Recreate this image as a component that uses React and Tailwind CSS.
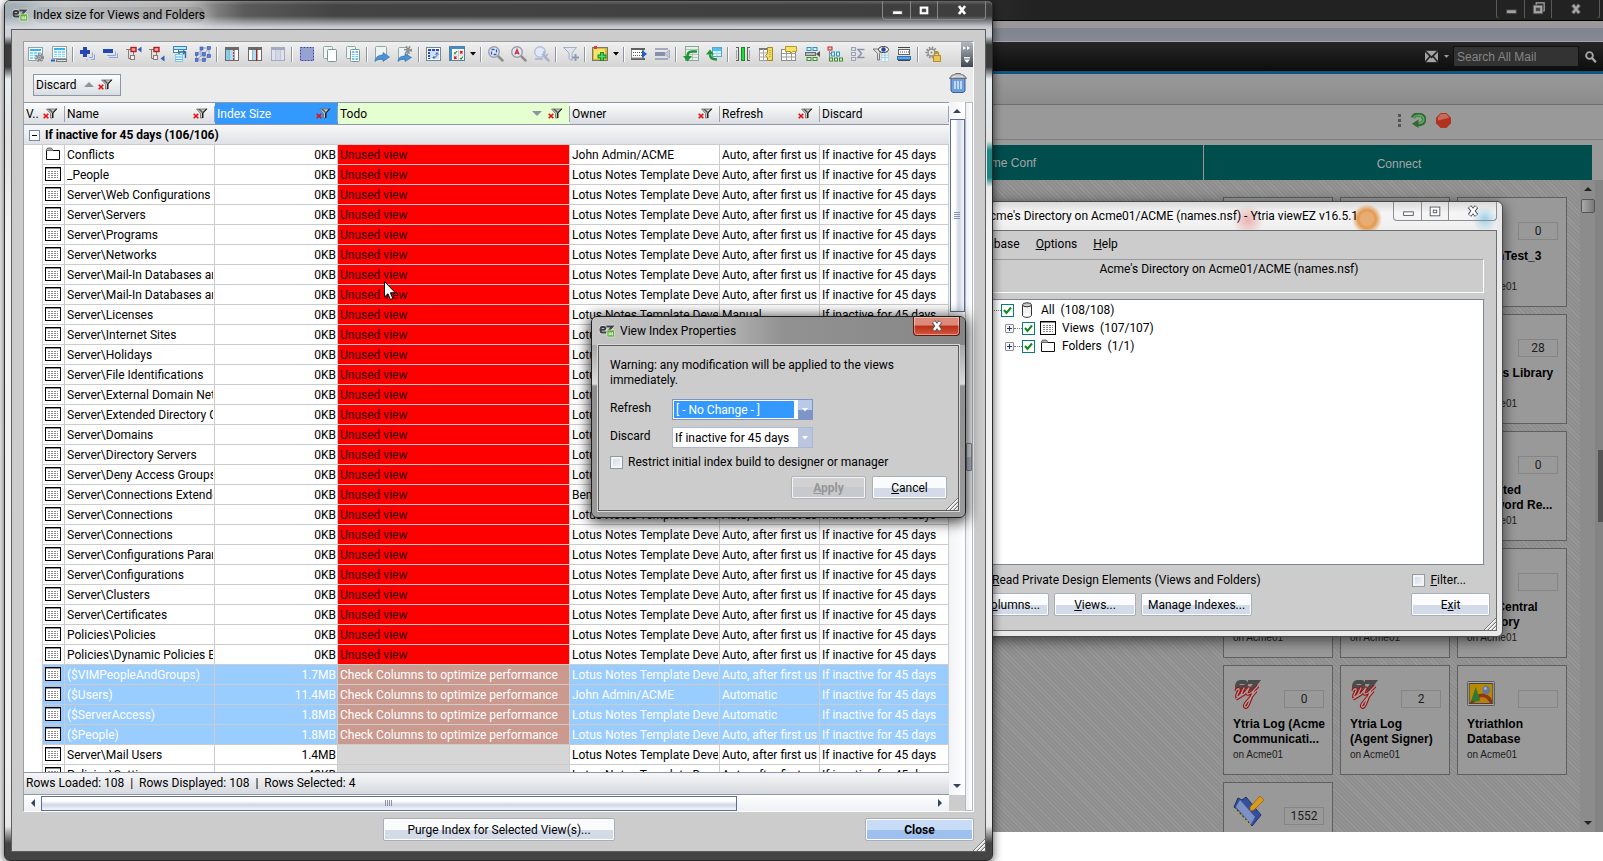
import React, { useState } from "react";
import clsx from "clsx";

const LOTUS = "Lotus Notes Template Deve";
const AUTO_FIRST = "Auto, after first us";
const INACTIVE = "If inactive for 45 days";

const unusedViews = [
  { name: "Conflicts", folder: true, owner: "John Admin/ACME" },
  { name: "_People" },
  { name: "Server\\Web Configurations" },
  { name: "Server\\Servers" },
  { name: "Server\\Programs" },
  { name: "Server\\Networks" },
  { name: "Server\\Mail-In Databases ar" },
  { name: "Server\\Mail-In Databases ar" },
  { name: "Server\\Licenses", refresh: "Manual" },
  { name: "Server\\Internet Sites" },
  { name: "Server\\Holidays" },
  { name: "Server\\File Identifications" },
  { name: "Server\\External Domain Net" },
  { name: "Server\\Extended Directory C" },
  { name: "Server\\Domains" },
  { name: "Server\\Directory Servers" },
  { name: "Server\\Deny Access Groups" },
  { name: "Server\\Connections Extende", owner: "Benjamin Admin/ACME" },
  { name: "Server\\Connections" },
  { name: "Server\\Connections" },
  { name: "Server\\Configurations Parar" },
  { name: "Server\\Configurations" },
  { name: "Server\\Clusters" },
  { name: "Server\\Certificates" },
  { name: "Policies\\Policies" },
  { name: "Policies\\Dynamic Policies B" },
].map((row) => ({ ...row, size: "0KB", todo: "Unused view" }));

const CHECK = "Check Columns to optimize performance";

const rows = [
  ...unusedViews,
  { name: "($VIMPeopleAndGroups)", size: "1.7MB", todo: CHECK, selected: true },
  {
    name: "($Users)",
    size: "11.4MB",
    todo: CHECK,
    selected: true,
    owner: "John Admin/ACME",
    refresh: "Automatic",
  },
  {
    name: "($ServerAccess)",
    size: "1.8MB",
    todo: CHECK,
    selected: true,
    refresh: "Automatic",
  },
  { name: "($People)", size: "1.8MB", todo: CHECK, selected: true },
  { name: "Server\\Mail Users", size: "1.4MB" },
  { name: "Policies\\Settings", size: "43KB" },
];

const cards = [
  { title: "Agent Log", count: "4", icon: "ez" },
  { title: "Acme Mail", count: "12", icon: "ez" },
  { title: "ActionTest_3", count: "0" },
  { title: "Domino Log", count: "1", icon: "ez" },
  { title: "Catalog", count: "7", icon: "ez" },
  { title: "Acme's Library", count: "28" },
  { title: "Monitoring", count: "3", icon: "ez" },
  { title: "Statistics", count: "9", icon: "ez" },
  { title: "Activated\nPassword Re...", count: "0" },
  { title: "Reports", count: "", icon: "ez" },
  { title: "Requests", count: "", icon: "ez" },
  { title: "Data Central\nDirectory", count: "" },
  { title: "Ytria Log (Acme\nCommunicati...", count: "0", icon: "ez" },
  { title: "Ytria Log\n(Agent Signer)", count: "2", icon: "ez" },
  { title: "Ytriathlon\nDatabase", count: "", icon: "picture" },
  { title: "Journal", count: "1552", icon: "book" },
];

/* ---------- icons ---------- */

const Svg = ({ size = 16, children, className, ...rest }) => (
  <svg
    width={size}
    height={size}
    viewBox="0 0 16 16"
    fill="none"
    aria-hidden="true"
    className={clsx("block shrink-0", className)}
    {...rest}
  >
    {children}
  </svg>
);

const Sheet = ({ x = 0, y = 1, w = 14, h = 13 }) => (
  <g>
    <rect x={x + 0.5} y={y + 0.5} width={w} height={h} fill="#fff" stroke="#8aa5a8" />
    <rect x={x + 2} y={y + 2} width={w - 3} height="2" fill="#35b4e8" />
    <rect x={x + 2} y={y + 5} width={w - 3} height={h - 6} fill="#8fd8f5" />
    <path
      d={`M${x + 2} ${y + 7.5}h${w - 3}M${x + 2} ${y + 9.5}h${w - 3}M${x + 5.5} ${y + 5}v${h - 6}M${x + 9.5} ${y + 5}v${h - 6}`}
      stroke="#fff"
      strokeOpacity=".7"
    />
  </g>
);

const Columns = ({ a, b, c, bar, dashed, frame = "#6a6a6a", side = "#d9d6d2" }) => (
  <g>
    <rect x="1.500" y="1.500" width="13" height="13" fill={side} stroke={frame} />
    <rect x="2" y="4" width="3" height="10" fill={a} />
    <rect x="6" y="4" width="4" height="10" fill={b} />
    <rect x="11" y="4" width="3" height="10" fill={c} />
    <path d="M5.500 4v10M10.500 4v10" stroke={frame} strokeOpacity=".4" />
    <path d="M1 2.500h14" stroke={frame} strokeWidth="3" />
    {bar && <path d="M9.500 3v12" stroke={bar} strokeDasharray={dashed ? "2 1" : undefined} />}
  </g>
);

const Cog = ({ x = 10, y = 10, r = 3, color = "#8a8a8a" }) => (
  <g>
    <circle cx={x} cy={y} r={r + 1} stroke={color} strokeWidth="2" strokeDasharray="1.5 1.4" />
    <circle cx={x} cy={y} r={r - 0.5} fill="#e6e6e6" stroke={color} strokeWidth="1.3" />
    <circle cx={x} cy={y} r="1" fill={color} />
  </g>
);

const Magnifier = ({ ring = "#9a9fa8", handle = "#8f8f8f", children }) => (
  <g>
    <path d="M10.500 10.500L14.500 14.500" stroke={handle} strokeWidth="2.500" strokeLinecap="round" />
    <circle cx="6" cy="6" r="5.300" fill="#dfe9fb" stroke={ring} strokeWidth="1.400" />
    {children}
  </g>
);

const toolIcons = {
  gridSettings: (
    <>
      <Sheet />
      <Cog x={11.5} y={11.5} r={2.5} />
    </>
  ),
  gridBar: (
    <>
      <Sheet x={1} y={0} w={14} h={12} />
      <path d="M0 14.500h4" stroke="#2a5fc0" strokeWidth="2" />
      <path d="M5 14.500h11" stroke="#7b7b7b" strokeWidth="3" />
      <path d="M6 14.500h9" stroke="#ddd" />
    </>
  ),
  expand: (
    <>
      <path d="M9 11.500h3.500v-5M11 13.500h3.500v-5M7 13v1.500" stroke="#8fa6dc" />
      <path d="M5 1v10M0 6h10" stroke="#2446b0" strokeWidth="4" />
    </>
  ),
  collapse: (
    <>
      <path d="M4 9.500h8.500v-4M6 11.500h8.500v-4" stroke="#8fa6dc" />
      <path d="M0 5h10" stroke="#2446b0" strokeWidth="4" />
    </>
  ),
  treeUp: (
    <>
      <path d="M0 3.500h5M2.500 3.500v9h2M9 8v0M7.500 6v3" stroke="#8a7a74" />
      <rect x="5" y="1.500" width="5" height="4" fill="#f4a3a3" stroke="#b51c1c" strokeWidth="1.400" />
      <rect x="4.500" y="9.500" width="4" height="4" fill="#eee" stroke="#8a7a74" />
      <path d="M15.500 .5v6l-4-3z" fill="#2f5fc0" />
    </>
  ),
  treeDown: (
    <>
      <path d="M0 3.500h5M2.500 3.500v9h2M7.500 6v3" stroke="#8a7a74" />
      <rect x="5" y="1.500" width="5" height="4" fill="#f4a3a3" stroke="#b51c1c" strokeWidth="1.400" />
      <rect x="4.500" y="9.500" width="4" height="4" fill="#eee" stroke="#8a7a74" />
      <path d="M15.500 9.500v6l-4-3z" fill="#2f5fc0" />
    </>
  ),
  swap: (
    <>
      <rect x="1.500" y=".5" width="13" height="3" fill="#b8e6f8" stroke="#3d86ad" />
      <rect x="1.500" y="3.500" width="5" height="3" fill="#fff" stroke="#3d86ad" />
      <rect x="3.500" y="8.500" width="7" height="7" fill="#e5f6fd" stroke="#7ccbea" />
      <path d="M4 11h6M4 13.500h6" stroke="#58b4d8" />
      <path d="M7 8V6h6M13.500 12V6M11 4.500L13.500 6 11 8" stroke="#2e6fa8" strokeWidth="1.400" />
    </>
  ),
  nodes: (
    <>
      <path d="M1.500 14V8H9v6zM6 10V2h8v8z" stroke="#8fa0cc" />
      <path d="M1.500 8L6 5M9 8l5-6M1.500 14L6 10M9 14l5-4" stroke="#8fa0cc" />
      <g fill="#5d7bd0" stroke="#3556b8" strokeWidth=".6">
        <rect x="0" y="6.500" width="3" height="3" />
        <rect x="7.500" y="6.500" width="3" height="3" />
        <rect x="0" y="12.500" width="3" height="3" />
        <rect x="7.500" y="12.500" width="3" height="3" />
        <rect x="12.500" y=".5" width="3" height="3" />
        <rect x="12.500" y="8.500" width="3" height="3" />
        <rect x="5" y="1" width="3" height="3" />
      </g>
    </>
  ),
  colFreeze: <Columns a="#7fd0f5" b="#a8e0f8" c="#fff" bar="#d42a2a" dashed />,
  colUnfreeze: <Columns a="#fff" b="#a8e0f8" c="#fff" bar="#c01515" />,
  colFaded: <Columns a="#dfe2ee" b="#d2d7e8" c="#dfe2ee" frame="#a5abbf" side="#d5d9e6" />,
  selectAll: (
    <rect x="1.500" y="1.500" width="13" height="13" fill="#98a2d0" stroke="#2f49b5" strokeDasharray="2 1" />
  ),
  copy: (
    <>
      <rect x="1.500" y=".5" width="9" height="12" rx="1" fill="#eef6f3" stroke="#8fa8a2" />
      <rect x="5.500" y="3.500" width="9" height="12" rx="1" fill="#fff" stroke="#7a9592" />
    </>
  ),
  copyGrid: (
    <>
      <rect x="1.500" y=".5" width="9" height="12" rx="1" fill="#eef6f3" stroke="#8fa8a2" />
      <rect x="5.500" y="3.500" width="9" height="12" rx="1" fill="#fff" stroke="#7a9592" />
      <rect x="7" y="5" width="6" height="9" fill="#6cc8ee" />
      <path d="M7 7.500h6M7 9.500h6M7 11.500h6M10 5v9" stroke="#fff" />
    </>
  ),
  exportSheet: (
    <>
      <rect x="1.500" y=".5" width="11" height="13" rx="1" fill="#eef4f2" stroke="#8fa8a2" />
      <path d="M1 15.500c0-4 3-6.500 8-6.500V6.500l6.500 4.500L9 15.500V13c-3 0-6 .5-8 2.500z" fill="#4a93d6" stroke="#2a6ab0" strokeWidth=".6" />
    </>
  ),
  exportCog: (
    <>
      <rect x="1.500" y="1.500" width="9" height="12" rx="1" fill="#eef4f2" stroke="#8fa8a2" />
      <Cog x={11} y={4} r={2} />
      <path d="M1 15.500c0-4 3-5.500 7-5.500V7.500l6.500 4-6.500 4V13c-3 0-5 .5-7 2.500z" fill="#4a93d6" stroke="#2a6ab0" strokeWidth=".6" />
    </>
  ),
  chartGrid: (
    <>
      <rect x=".5" y="1.500" width="14" height="13" fill="#fff" stroke="#6a8a94" />
      <rect x="2" y="3" width="11" height="10" fill="#d2def2" />
      <path d="M2 4h11" stroke="#2a4fae" strokeWidth="2" strokeDasharray="3 1" />
      <path d="M3 6v7" stroke="#2a4fae" strokeWidth="2" strokeDasharray="2 1" />
      <path d="M7 11.500c4 0 4-2 4-4.500M9.500 8.500L11 6.500l1.500 2M8.500 10L7 11.500 8.500 13" stroke="#3a66c0" />
    </>
  ),
  checkGrid: (
    <>
      <rect x=".5" y=".5" width="15" height="14" fill="#fff" stroke="#5a7f98" />
      <path d="M1 2h14M2 3v11" stroke="#3a8fd0" strokeWidth="2" />
      <path d="M9.500 4v10M4 9h11" stroke="#9ab0bd" strokeWidth=".6" />
      <path d="M5 6.500l1 1 2-2.500M11 12l1 1 2-2.500" stroke="#1d8f30" strokeWidth="1.200" />
      <path d="M11 5l2.500 2.500M13.500 5L11 7.500M5 10.500l2.500 2.500M7.500 10.500L5 13" stroke="#d11" strokeWidth="1.200" />
    </>
  ),
  zoomBox: (
    <Magnifier>
      <rect x="3.500" y="3.500" width="5" height="5" stroke="#3157b8" strokeWidth="1.300" strokeDasharray="3 2" />
    </Magnifier>
  ),
  zoomText: (
    <Magnifier>
      <path d="M4 8.500l2-5 2 5M4.500 7h3" stroke="#cf3030" strokeWidth="1.300" />
    </Magnifier>
  ),
  zoomFaded: (
    <Magnifier ring="#b7bfd3" handle="#a9b2c8">
      <path d="M1 13h8M10 5v6M8 8l3 3 3-3" stroke="#a7b2cc" strokeWidth="1.500" />
    </Magnifier>
  ),
  filterFaded: (
    <>
      <path d="M.5 1.500h13L9 7v7.500l-3-2V7z" fill="#dfe3ec" stroke="#a6aec2" />
      <path d="M9 11.500h7M12.500 8v7" stroke="#8f9bbb" strokeWidth="2" />
    </>
  ),
  addNote: (
    <>
      <rect x=".5" y="1.500" width="15" height="13" fill="#d8b93a" stroke="#7a776c" />
      <rect x="2" y="3" width="11" height="10" fill="#f6e36a" />
      <path d="M10 6v9M5.500 10.500h9" stroke="#1b8f2c" strokeWidth="4" />
      <path d="M10 7v7M6.500 10.500h7" stroke="#4fe05f" strokeWidth="1.500" />
      <rect x="2" y="0" width="3" height="3" fill="#e43c3c" />
    </>
  ),
  rowRight: (
    <>
      <path d="M0 3h14M0 13h14" stroke="#5f6164" strokeWidth="2" />
      <path d="M.5 4v8h12V4" fill="#fff" stroke="#8c8c8c" />
      <path d="M2 6.500h9M2 9.500h9" stroke="#555" strokeDasharray="1 1" />
      <path d="M11 4l5 4-5 4z" fill="#1f5fc8" />
    </>
  ),
  rowLeft: (
    <>
      <path d="M1 3h13M1 13h13" stroke="#a4aabc" strokeWidth="2" />
      <rect x="1" y="6" width="10" height="4" fill="#8790ab" />
      <path d="M15.500 4v8l-5-4z" fill="#c3c9d8" stroke="#8b94ad" strokeWidth=".6" />
    </>
  ),
  importGrid: (
    <>
      <rect x="2.500" y=".5" width="13" height="14" fill="#e6f0ea" stroke="#8aa894" />
      <path d="M3 3.500h12M3 8.500h12M3 11.500h12M9.500 7v7" stroke="#b3c6ba" />
      <path d="M14 5.500H9c-3 0-4.500 1-4.500 5" stroke="#1f9434" strokeWidth="2.500" />
      <path d="M0 10h9l-4.500 5.500z" fill="#1f9434" />
    </>
  ),
  refreshGrid: (
    <>
      <rect x="6.500" y="1.500" width="9" height="9" fill="#dff3fb" stroke="#58a7c8" />
      <path d="M7 3.500h8" stroke="#4fc3ea" strokeWidth="3" />
      <path d="M7 7.500h8M11 5v5" stroke="#9fd5ea" />
      <path d="M11 13.500c-5 0-7-1.500-7-5" stroke="#1f9434" strokeWidth="2.500" />
      <path d="M0 8.500L4 3.500l4 5z" fill="#1f9434" />
    </>
  ),
  colGreen: (
    <>
      <path d="M1 1.500h3M12 1.500h3M1 14.500h3M12 14.500h3M3.500 2v12M12.500 2v12" stroke="#5c5c5c" />
      <path d="M1.500 4v9M14.500 4v9" stroke="#a9a9a9" />
      <rect x="6.500" y="1.500" width="3" height="13" fill="#22d83c" stroke="#168a29" />
    </>
  ),
  colYellow: (
    <>
      <rect x="1.500" y="2.500" width="13" height="12" fill="#fff" stroke="#9a9a9a" />
      <path d="M1 3h14" stroke="#777" strokeWidth="2" />
      <path d="M1 7h14M1 11h14M5.500 3v12" stroke="#a5a5a5" />
      <path d="M9.500 1.500h5v13h-5v-3l-2-2 2-2z" fill="#f1dc6a" stroke="#a58a17" />
      <path d="M12 4v8" stroke="#a58a17" strokeDasharray="1 1" />
    </>
  ),
  noteGrid: (
    <>
      <rect x=".5" y="3.500" width="14" height="11" fill="#fff" stroke="#8b8b8b" />
      <path d="M1 7.500h14M1 11h14M5.500 4v11M10.500 4v11" stroke="#9b9b9b" />
      <path d="M4.500.5h11v5h-4l-2 2.500V5.500h-5z" fill="#f6e36a" stroke="#b59a20" />
    </>
  ),
  flow: (
    <>
      <rect x="3" y="1.500" width="4" height="3" fill="#cdeefa" stroke="#2c93bd" />
      <rect x="9" y="1.500" width="4" height="3" fill="#cdeefa" stroke="#2c93bd" />
      <rect x="1.500" y="6.500" width="10" height="3" fill="#bbb" stroke="#6a6a6a" />
      <path d="M16 5v6l-4-3z" fill="#555" />
      <rect x="3" y="11.500" width="4" height="3" fill="#d7f2d2" stroke="#3a8a30" />
      <rect x="9" y="11.500" width="4" height="3" fill="#d7f2d2" stroke="#3a8a30" />
    </>
  ),
  hierarchy: (
    <>
      <path d="M2.500 5v8M2.500 7.500H5" stroke="#888" />
      <rect x="1" y="1" width="4" height="3" fill="#f8c5c5" stroke="#c22525" />
      <rect x="4.500" y="6" width="3" height="4" fill="#cdeefa" stroke="#2c93bd" />
      <rect x="9.500" y="6" width="3" height="4" fill="#cdeefa" stroke="#2c93bd" />
      <rect x="2.500" y="12" width="3" height="3" fill="#d7f2d2" stroke="#3a8a30" />
      <rect x="7.500" y="12" width="3" height="3" fill="#d7f2d2" stroke="#3a8a30" />
      <rect x="12.500" y="12" width="3" height="3" fill="#d7f2d2" stroke="#3a8a30" />
    </>
  ),
  sum: (
    <>
      <rect x="1.500" y="1.500" width="4" height="3" fill="#dfe3ec" stroke="#9aa3b8" />
      <rect x="1.500" y="6.500" width="4" height="3" fill="#dfe3ec" stroke="#9aa3b8" />
      <rect x="1.500" y="11.500" width="4" height="3" fill="#dfe3ec" stroke="#9aa3b8" />
      <path d="M14.500 3.500H8l3.500 4-3.500 4h6.500" stroke="#8b94ad" strokeWidth="1.500" />
    </>
  ),
  filterEye: (
    <>
      <rect x="8.500" y="6.500" width="7" height="9" fill="#e5f6fd" stroke="#c3d6df" />
      <path d="M9 9h6M9 11.500h6M12 7v8" stroke="#9fcfe2" />
      <path d="M0 3h9L6.500 7.500V14h-2V7.500z" fill="#e0e0e0" stroke="#7a7a7a" />
      <ellipse cx="10.500" cy="3.500" rx="5" ry="3" fill="#fff" stroke="#333" />
      <circle cx="10.500" cy="3.500" r="2.300" fill="#23479f" />
    </>
  ),
  rowsBlue: (
    <>
      <path d="M2 1.500h12M2 14.500h12" stroke="#444" />
      <rect x="2.500" y="3.500" width="11" height="5" fill="#fff" stroke="#666" />
      <path d="M4 6h9" stroke="#555" strokeDasharray="1 1" />
      <rect x="1.500" y="10.500" width="13" height="3" fill="#5ea6e8" stroke="#2b6fb8" />
    </>
  ),
  cogLock: (
    <>
      <Cog x={6.5} y={6.5} r={4} />
      <path d="M9.500 10V8c0-3 4-3 4 0v2" stroke="#b8902a" strokeWidth="1.500" />
      <rect x="8.500" y="9.500" width="7" height="6" fill="#ecc355" stroke="#b8902a" />
    </>
  ),
};

const toolbar = [
  "gridSettings", "gridBar", "|",
  "expand", "collapse", "treeUp", "treeDown", "swap", "nodes", "|",
  "colFreeze", "colUnfreeze", "colFaded", "|",
  "selectAll", "copy", "copyGrid", "|",
  "exportSheet", "exportCog", "|",
  "chartGrid", "checkGrid", "v", "|",
  "zoomBox", "zoomText", "zoomFaded", "|",
  "filterFaded", "|",
  "addNote", "v", "|",
  "rowRight", "rowLeft", "|",
  "importGrid", "refreshGrid", "|",
  "colGreen", "colYellow", "noteGrid", "flow", "hierarchy", "sum", "filterEye", "rowsBlue", "|",
  "cogLock",
];

const EzIcon = () => (
  <Svg>
    <path d="M7 9.500H3C1 9.500 1 4 3 4h2c2 0 1.500 2.800 0 2.800H2M8 3.500h5.500L9 9.500" stroke="#fff" strokeWidth="3.500" strokeOpacity=".5" />
    <path d="M7 9.500H3C1 9.500 1 4 3 4h2c2 0 1.500 2.800 0 2.800H2M7.500 3.500h6L8 9.500" stroke="#3c4043" strokeWidth="2" />
    <rect x="8" y="7" width="7.500" height="7" fill="#5fae33" stroke="#e8f4e0" strokeWidth=".6" />
    <path d="M10 9v3.500M11.800 9v3.500M13.500 9v3.500M10 11h3.500" stroke="#fff" strokeWidth=".7" />
  </Svg>
);

const ViewIcon = () => (
  <svg width="16" height="14" viewBox="0 0 16 14" aria-hidden="true" className="block">
    <rect x=".5" y=".5" width="15" height="13" fill="#fff" stroke="#000" />
    <path d="M1 1.500h14" stroke="#8a8a8a" />
    <path d="M3 4.500h10M3 6.500h10M3 8.500h10M3 10.500h10" stroke="#6a6a6a" strokeDasharray="2 1" strokeOpacity=".8" />
  </svg>
);

const FolderIcon = () => (
  <svg width="16" height="14" viewBox="0 0 16 14" fill="none" aria-hidden="true" className="block">
    <path d="M1.500 3.500v9h13v-9H8" fill="#fff" stroke="#111" />
    <path d="M1 3.500L2.500 1h4L8 3.500z" fill="#aaa" stroke="#555" strokeWidth=".8" />
  </svg>
);

const DbIcon = () => (
  <Svg>
    <path d="M3.500 3v10.500c2 2.500 7 2.500 9 0V3" fill="#fff" stroke="#333" />
    <path d="M4.500 6h7M4.500 8h7M4.500 10h7" stroke="#ccc" strokeDasharray="1 1" />
    <ellipse cx="8" cy="2.800" rx="4.500" ry="2" fill="#ccc" stroke="#333" />
  </Svg>
);

const FilterIcon = () => (
  <svg width="15" height="12" viewBox="0 0 15 12" fill="none" aria-hidden="true" className="block shrink-0">
    <path d="M3.500 1H14L9.500 5.500V10H7.500V5.500z" fill="#c9c9c9" stroke="#6a6a6a" strokeWidth=".8" />
    <path d="M14.500 .8L10.500 5v5H9V5l4-4.200z" fill="#222" />
    <path d="M5 1l4 4 1-1-3-3z" fill="#555" />
    <path d="M.7 5.700l4.600 4.600M5.300 5.700L.7 10.300" stroke="#e80c0c" strokeWidth="1.600" />
  </svg>
);

const TrashIcon = () => (
  <svg width="18" height="20" viewBox="0 0 18 20" aria-hidden="true" className="block">
    <path d="M2 5h14v13l-2 1.500H4L2 18z" fill="#6d9fdc" stroke="#3c5f94" />
    <path d="M6 8v8M9 8v8M12 8v8" stroke="#dbe9fa" strokeWidth="1.500" />
    <path d="M.5 5.500c1-3 4-4 5-4L7 .5h4l1.500 1c1 0 4 1 5 4z" fill="#b4b7ba" stroke="#6e7073" />
    <path d="M3 4.500c2-1.500 6-2 11-1" stroke="#eee" fill="none" />
  </svg>
);

const Grip = () => (
  <svg width="12" height="12" viewBox="0 0 12 12" aria-hidden="true" className="block">
    <path d="M1 12L12 1M5 12l7-7M9 12l3-3" stroke="#fff" strokeWidth="1.500" />
    <path d="M0 12L12 0M4 12l8-8M8 12l4-4" stroke="#777" />
  </svg>
);

const SCRAWL =
  "M3 13c1-3 4-3 3 0l-2 4c-1 3 2 2 4-1l3-6c-3 5-3 8 0 6l5-6c-2 4-3 6-1 6 3 0 5-3 8-6l2-2M21 12l-6 15c-2 4-5 2-2-2l10-12M3 21l8-5";

const CardIcon = ({ kind }) => {
  if (kind === "ez")
    return (
      <svg width="30" height="32" viewBox="0 0 30 32" fill="none" aria-hidden="true">
        <path d="M12 14H7c-4 0-4-10 0-10h4c3 0 3 5 0 5H5M15 4h9l-7 9" stroke="#4b4b4b" strokeWidth="4" />
        <path d={SCRAWL} stroke="#a01010" strokeWidth="3.500" strokeLinejoin="round" />
        <path d={SCRAWL} stroke="#a8a0a0" strokeWidth="1.300" strokeLinejoin="round" />
      </svg>
    );
  if (kind === "picture")
    return (
      <svg width="28" height="28" viewBox="0 0 32 28" preserveAspectRatio="none" aria-hidden="true">
        <rect x=".5" y="3.500" width="31" height="24" rx="1" fill="#aaa" stroke="#555" />
        <rect x="2.500" y="5.500" width="27" height="20" fill="#b98a00" stroke="#444" />
        <path d="M3 25c8-12 20-12 26-3v3z" fill="#8a3a12" />
        <path d="M8 25c5-8 14-8 18 0z" fill="#c07a10" />
        <path d="M10 9l5 13c-2 2-8 2-10 0z" fill="#2c7a34" />
        <circle cx="22" cy="12" r="4.500" fill="#66779a" />
        <circle cx="21" cy="10.500" r="1.500" fill="#a9b6cf" />
      </svg>
    );
  if (kind === "book")
    return (
      <svg width="32" height="32" viewBox="0 0 32 32" aria-hidden="true">
        <path d="M1 12L5 3l4 2 4-3 15 18-9 11z" fill="#34509c" stroke="#1c2f6b" />
        <path d="M3 12l4-7 15 17-4 7z" fill="#7d92c4" />
        <path d="M2 14l16 16" stroke="#b0a040" strokeWidth="2" strokeDasharray="2 2" />
        <path d="M17 12L27 1l4 4-10 10-4 1z" fill="#d89a1a" stroke="#8d5f08" strokeWidth=".7" />
      </svg>
    );
  return <div className="h-7" />;
};

/* ---------- shared controls ---------- */

const PushButton = ({ children, className, ...rest }) => (
  <button
    type="button"
    className={clsx(
      "flex h-[23px] items-center justify-center rounded-[2px] border border-[#a9aebb] shadow-[inset_0_0_0_1px_#fff] whitespace-nowrap",
      className || "bg-[linear-gradient(#fafbfd_50%,#d3dae8_50%)]"
    )}
    {...rest}
  >
    {children}
  </button>
);

const CaptionButtons = ({ tone, restore }) => {
  const light = tone === "light";
  const edge = light ? "border-[#8b8d92]" : tone === "dim" ? "border-[#59595b]" : "border-[#85878a]";
  const mark = light ? "#fff" : tone === "dim" ? "#a5a5a8" : "#fff";
  const rim = light ? "#4a4d5c" : "#444";
  return (
    <div className={clsx("flex h-[19px] rounded-b-[4px] border border-t-0", edge)}>
      <button type="button" aria-label="Minimize" className={clsx("flex w-[28px] items-center justify-center border-r", edge)}>
        <Svg size={14}><rect x="3" y="9" width="11" height="4" fill={mark} stroke={rim} /></Svg>
      </button>
      <button type="button" aria-label="Maximize" className={clsx("flex w-[27px] items-center justify-center border-r", edge)}>
        <Svg size={14}>
          {restore && <rect x="6" y="1" width="9" height="9" fill="none" stroke={mark} strokeWidth="1.500" />}
          <rect x="2.500" y="3.500" width="11" height="10" fill={mark} stroke={rim} />
          <rect x="6" y="7" width="4" height="3" fill={light ? "#fff" : "#444"} stroke={rim} />
        </Svg>
      </button>
      <button type="button" aria-label="Close" className="flex w-[47px] items-center justify-center">
        <Svg size={14}>
          <path d="M4 3l8 10M12 3L4 13" stroke={rim} strokeWidth="5" />
          <path d="M4.500 3.500l7 9M11.500 3.500l-7 9" stroke={mark} strokeWidth="3" />
        </Svg>
      </button>
    </div>
  );
};

const Arrow = ({ dir = "up", color = "#33455f" }) => (
  <svg width="8" height="8" viewBox="0 0 8 8" aria-hidden="true" className="block">
    {dir === "up" && <path d="M0 6l4-4 4 4z" fill={color} />}
    {dir === "down" && <path d="M0 2l4 4 4-4z" fill={color} />}
    {dir === "left" && <path d="M6 0L2 4l4 4z" fill={color} />}
    {dir === "right" && <path d="M2 0l4 4-4 4z" fill={color} />}
  </svg>
);

const SortMark = ({ down }) => (
  <svg width="10" height="5" viewBox="0 0 10 5" aria-hidden="true" className="block">
    <path d={down ? "M0 0h10L5 5z" : "M0 5h10L5 0z"} fill="#8c959c" />
  </svg>
);

const CheckBox = ({ id, green, ...rest }) => (
  <input
    id={id}
    type="checkbox"
    className={clsx(
      "h-[13px] w-[13px] shrink-0 appearance-none border",
      green
        ? "border-[#0b7c7c] bg-white"
        : "border-[#8e9aa8] bg-[linear-gradient(135deg,#cfd8e6,#f6f8fb)] shadow-[inset_0_0_0_2px_#f4f4f4]"
    )}
    {...rest}
  />
);

/* ---------- mail client behind the tool windows ---------- */

const MailClient = () => (
  <div className="absolute top-0 right-0 left-[960px] flex h-[832px] flex-col bg-[#999] font-['Liberation_Sans',sans-serif] text-[#1c1c1c]">
    <div className="flex h-[21px] shrink-0 justify-end border-b border-black bg-[linear-gradient(90deg,#2e2e2e,#222_12%)] pr-[3px]">
      <div className="h-[18px] overflow-hidden">
        <CaptionButtons tone="dim" restore />
      </div>
    </div>
    <div className="h-[21px] shrink-0 border-b border-[#a4a6aa] bg-[linear-gradient(#999_35%,#7f848f_36%,#858995)]" />
    <div className="flex h-[32px] shrink-0 items-center justify-end border-b-[3px] border-[#0d557c] bg-[linear-gradient(#262626,#0d0d0d)]">
      <Svg size={13}>
        <rect x="0" y="1" width="16" height="14" fill="#a3a3a3" />
        <path d="M0 1l8 8 8-8M0 15l6-7M16 15l-6-7" stroke="#222" strokeWidth="2" />
      </Svg>
      <span className="ml-[6px]">
        <svg width="5" height="4" viewBox="0 0 5 4" aria-hidden="true"><path d="M0 0h5L2.500 3z" fill="#999" /></svg>
      </span>
      <input
        aria-label="Search All Mail"
        placeholder="Search All Mail"
        className="ml-[4px] h-[21px] w-[126px] border border-[#111] bg-[#333] px-[3px] text-[12px] placeholder:text-[#858585]"
      />
      <button type="button" aria-label="Search" className="mx-[6px]">
        <Svg size={12}>
          <circle cx="6" cy="6" r="4.500" stroke="#a5a5a5" strokeWidth="2.500" />
          <path d="M9.500 9.500l5 5.500" stroke="#a5a5a5" strokeWidth="3" />
        </Svg>
      </button>
    </div>
    <div className="h-[31px] shrink-0 border-b border-[#6e6e6e] bg-[linear-gradient(#999,#8c8c8c)]" />
    <div className="flex h-[35px] shrink-0 items-center justify-end gap-[10px] border-b border-[#7e7e7e] pr-[152px] pb-[3px]">
      <span className="h-[13px] border-l-[3px] border-dotted border-[#555]" />
      <Svg size={15}>
        <path d="M2 5c2-5 12-4 12 2 0 4-4 5-7 5" stroke="#2e6b2e" strokeWidth="4.500" />
        <path d="M2.500 5c3-4 11-3 11 2 0 3-3 4-6 4" stroke="#5aa65a" strokeWidth="2" />
        <path d="M8 7v9l-7-4.500z" fill="#2e6b2e" />
      </Svg>
      <Svg size={15}>
        <path d="M5 0h6l5 5v6l-5 5H5l-5-5V5z" fill="#b0321f" />
        <path d="M5 1h6l3 4-12 3V5z" fill="#c96a5a" />
      </Svg>
    </div>
    <div className="mt-[5px] mr-[11px] flex h-[35px] shrink-0 items-center bg-[#004d4d] text-center text-[12px] text-[#a5a5a5]">
      <a href="#conf" className="h-full w-[244px] border-r border-[#999] pr-[150px] leading-[37px]">
        <span className="whitespace-nowrap">Acme Conf</span>
      </a>
      <a href="#connect" className="flex-1 pt-[2px] pl-[2px]">Connect</a>
    </div>
    <div className="flex min-h-0 flex-1">
      <div className="flex min-w-0 flex-1 justify-end overflow-hidden bg-[repeating-linear-gradient(45deg,#989898_0_1px,#8e8e8e_1px_3px)] pt-[17px] pr-[13px]">
        <div className="grid grid-cols-[repeat(3,110px)] content-start gap-[7px]">
          {cards.map((card) => (
            <div key={card.title} className="h-[110px] border border-[#5f5f5f] bg-[#999] pl-[9px]">
              <div className="flex h-[51px] justify-between pt-[12px] pr-[8px]">
                <CardIcon kind={card.icon} />
                <span className="mt-[12px] h-[18px] w-[40px] border border-[#858585] text-center font-['Roboto',sans-serif] text-[12px] leading-[17px]">
                  {card.count}
                </span>
              </div>
              <div className="h-[31px] text-[12px] leading-[15px] font-bold whitespace-pre text-black">{card.title}</div>
              <div className="text-[10px] leading-[13px]">on Acme01</div>
            </div>
          ))}
        </div>
      </div>
      <div className="flex w-[15px] flex-col items-center bg-[#8c8c8c] py-[5px]">
        <Arrow color="#222" />
        <div className="mt-[6px] h-[14px] w-[14px] rounded-[2px] border border-[#555] bg-[linear-gradient(90deg,#aaa,#777)]" />
        <div className="flex-1" />
        <Arrow dir="down" color="#222" />
      </div>
      <div className="w-[8px] bg-[#848484] pt-[270px]">
        <div className="ml-auto h-[72px] w-[5px] bg-[#555]" />
      </div>
    </div>
  </div>
);

/* ---------- viewEZ window ---------- */

const TreeRow = ({ id, label, icon, indent, expander }) => (
  <div className={clsx("flex h-[18px] items-center", indent)}>
    {expander ? (
      <>
        <button
          type="button"
          aria-label={`Expand ${label}`}
          className="flex h-[9px] w-[9px] items-center justify-center rounded-[1px] border border-[#8e8e8e] bg-[#f4f4f4]"
        >
          <svg width="5" height="5" viewBox="0 0 5 5" aria-hidden="true"><path d="M2.500 0v5M0 2.500h5" stroke="#23357a" /></svg>
        </button>
        <span className="w-[8px] border-t border-dotted border-[#777]" />
      </>
    ) : (
      <span className="w-[10px] border-t border-dotted border-[#777]" />
    )}
    <span className="grid">
      <CheckBox id={id} green defaultChecked style={{ gridArea: "1 / 1" }} />
      <svg width="13" height="13" viewBox="0 0 13 13" fill="none" aria-hidden="true" className="pointer-events-none" style={{ gridArea: "1 / 1" }}>
        <path d="M3 6l2.500 3L10 3.500" stroke="#0f8a1c" strokeWidth="2" />
      </svg>
    </span>
    <span className="mr-[6px] ml-[5px]">{icon}</span>
    <label htmlFor={id} className="whitespace-pre">{label}</label>
  </div>
);

const ViewEzWindow = () => (
  <div className="absolute top-[201px] left-[955px] flex h-[436px] w-[548px] flex-col rounded-[6px] border border-[#4a4a4a] bg-[#e9e9e9] px-[5px] pb-[5px] shadow-[0_3px_14px_rgba(0,0,0,0.6)]">
    <div className="flex h-[28px] shrink-0 justify-between bg-[radial-gradient(circle_at_287px_18px,#e9b0b0_0,transparent_16px),radial-gradient(circle_at_406px_17px,#e8ad74_0_6px,#e3994f_9px,transparent_15px),radial-gradient(circle_at_524px_17px,#9fd0e6_0,transparent_13px),linear-gradient(#d9d9d9,#f6f6f6_40%,#eee)] pl-[1px]">
      <div className="flex items-center gap-[4px]">
        <EzIcon />
        <span className="whitespace-nowrap">Acme's Directory on Acme01/ACME (names.nsf) - Ytria viewEZ v16.5.1</span>
      </div>
      <CaptionButtons tone="light" />
    </div>
    <div className="flex min-h-0 flex-1 flex-col border border-[#6e6e6e] bg-[#ccc] pl-[12px]">
      <div className="-ml-[5px] flex h-[25px] items-center gap-[16px]">
        <button type="button"><u>D</u>atabase</button>
        <button type="button"><u>O</u>ptions</button>
        <button type="button"><u>H</u>elp</button>
      </div>
      <div className="mt-[3px] mr-[12px] h-[34px] border border-t-[#9b9b9b] border-r-white border-b-white border-l-[#9b9b9b] pt-[1px] text-center leading-[16px]">
        Acme's Directory on Acme01/ACME (names.nsf)
      </div>
      <div className="mt-[6px] mr-[12px] min-h-0 flex-1 border border-[#7c8694] bg-white pt-[1px]">
        <TreeRow id="t-all" indent="pl-[16px]" label="All  (108/108)" icon={<DbIcon />} />
        <TreeRow id="t-views" indent="pl-[30px]" expander label="Views  (107/107)" icon={<ViewIcon />} />
        <TreeRow id="t-folders" indent="pl-[30px]" expander label="Folders  (1/1)" icon={<FolderIcon />} />
      </div>
      <div className="mt-[6px] mr-[12px] flex h-[18px] items-center justify-between">
        <span className="flex items-center gap-[5px]">
          <CheckBox id="read-private" />
          <label htmlFor="read-private"><u>R</u>ead Private Design Elements (Views and Folders)</label>
        </span>
        <span className="mr-[18px] flex items-center gap-[5px]">
          <CheckBox id="filter" />
          <label htmlFor="filter"><u>F</u>ilter...</label>
        </span>
      </div>
      <div className="mt-[4px] mb-[13px] flex gap-[5px] pr-[6px] pb-[1px]">
        <PushButton><span className="w-[73px]">C<u>o</u>lumns...</span></PushButton>
        <PushButton><span className="w-[80px]"><u>V</u>iews...</span></PushButton>
        <PushButton><span className="w-[109px]">Manage Indexes...</span></PushButton>
        <div className="flex-1" />
        <PushButton><span className="w-[77px]">E<u>x</u>it</span></PushButton>
      </div>
    </div>
    <div className="absolute right-[6px] bottom-[6px]"><Grip /></div>
  </div>
);

/* ---------- index size window ---------- */

const HeaderCell = ({ children, filter = true, className, ...rest }) => (
  <th
    className={clsx(
      "h-[23px] border-y border-y-[#8d97a6] p-0 text-left font-normal",
      className || "bg-[linear-gradient(#fdfdfd,#d9dce1)]"
    )}
    {...rest}
  >
    <div className="flex items-center justify-between overflow-hidden border-r border-[#9aa3b0] pr-[6px] pl-[2px] leading-[16px] whitespace-nowrap">
      {children}
      {filter && <FilterIcon />}
    </div>
  </th>
);

const Cell = ({ children, className }) => (
  <td className={clsx("h-[20px] overflow-hidden border-r border-b border-[#ccc] p-0 pr-[1px] pl-[2px]", className)}>
    <div className="overflow-hidden pt-[2px] leading-[17px] whitespace-nowrap">{children}</div>
  </td>
);

const IndexTable = () => (
  <table className="w-full table-fixed border-separate border-spacing-0">
    <colgroup>
      <col className="w-[19px]" />
      <col className="w-[22px]" />
      <col className="w-[150px]" />
      <col className="w-[123px]" />
      <col className="w-[232px]" />
      <col className="w-[150px]" />
      <col className="w-[100px]" />
      <col />
    </colgroup>
    <thead>
      <tr>
        <HeaderCell colSpan={2}>V..</HeaderCell>
        <HeaderCell>Name</HeaderCell>
        <HeaderCell className="bg-[#3399ff] text-white">Index Size</HeaderCell>
        <HeaderCell className="bg-[#e6ffd0]">
          <span className="flex-1">Todo</span>
          <span className="mr-[6px]"><SortMark down /></span>
        </HeaderCell>
        <HeaderCell>Owner</HeaderCell>
        <HeaderCell>Refresh</HeaderCell>
        <HeaderCell filter={false}>Discard</HeaderCell>
      </tr>
    </thead>
    <tbody>
      <tr>
        <th colSpan={8} className="h-[20px] border-b border-[#ccc] bg-[linear-gradient(#f8f8f9,#dfe1e5)] p-0 text-left leading-[17px] font-bold">
          <div className="flex items-center gap-[5px] pt-[2px] pl-[5px]">
            <button type="button" aria-label="Collapse group" className="flex h-[11px] w-[11px] items-center justify-center border border-[#6f8bb0] bg-white">
              <span className="w-[5px] border-t border-black" />
            </button>
            If inactive for 45 days (106/106)
          </div>
        </th>
      </tr>
      {rows.map((row, i) => (
        <tr key={i} className={row.selected ? "text-white" : "text-black"}>
          <td className="border-r border-[#ccc] bg-white p-0" />
          <td className={clsx("h-[20px] border-r border-b border-[#ccc] p-0 pb-[2px] pl-[2px]", row.selected ? "bg-[#99ccff]" : "bg-white")}>
            {row.folder ? <FolderIcon /> : <ViewIcon />}
          </td>
          <Cell className={row.selected ? "bg-[#99ccff]" : "bg-white"}>{row.name}</Cell>
          <Cell className={clsx("text-right", row.selected ? "bg-[#99ccff]" : "bg-white")}>{row.size}</Cell>
          <Cell className={clsx(!row.todo && "bg-[#d6d6d6]", row.todo && (row.selected ? "bg-[#cc998f]" : "bg-[#ff0000] text-[#300]"))}>
            {row.todo}
          </Cell>
          <Cell className={row.selected ? "bg-[#99ccff]" : "bg-white"}>{row.owner || LOTUS}</Cell>
          <Cell className={row.selected ? "bg-[#99ccff]" : "bg-white"}>{row.refresh || AUTO_FIRST}</Cell>
          <Cell className={row.selected ? "bg-[#99ccff]" : "bg-white"}>{INACTIVE}</Cell>
        </tr>
      ))}
    </tbody>
  </table>
);

const Toolbar = () => (
  <div className="flex h-[25px] shrink-0 items-center bg-[linear-gradient(#f0f0f0,#d4d4d4)] pb-[1px]">
    {toolbar.map((item, i) => {
      if (item === "|")
        return <span key={i} className="mx-[2px] h-[15px] w-[2px] shrink-0 border-r border-l border-r-white border-l-[#8d95a3]" />;
      if (item === "v")
        return (
          <button key={i} type="button" aria-label="More" className="flex w-[10px] shrink-0 justify-center">
            <svg width="6" height="4" viewBox="0 0 6 4" aria-hidden="true"><path d="M0 0h6L3 3.500z" fill="#000" /></svg>
          </button>
        );
      return (
        <button key={i} type="button" aria-label={item} className="flex w-[23px] shrink-0 justify-center">
          <Svg>{toolIcons[item]}</Svg>
        </button>
      );
    })}
    <button type="button" aria-label="Toolbar options" className="ml-auto flex h-[25px] w-[12px] items-center justify-center rounded-tr-[3px] bg-[linear-gradient(#b4b9c0,#3f4754)]">
      <svg width="8" height="18" viewBox="0 0 8 18" aria-hidden="true">
        <path d="M0 1l3 2-3 2zM4 1l3 2-3 2zM1 12h6v1.500H1zM1 14.500h6L4 18z" fill="#fff" />
      </svg>
    </button>
  </div>
);

const IndexWindow = () => (
  <div className="absolute top-0 bottom-0 left-[4px] flex w-[989px] flex-col rounded-[6px] border border-[#2a2a2a] bg-[linear-gradient(#c9ccd0_0,#cfd3d8_35px,#3b3b3b_44px,#3b3b3b_66px,#e8eef0_78px,#e2e2e2_140px,#f2f2f2_230px,#f0f0f0_760px,#e8e8e8_825px,#444_842px)] px-[6px] pb-[8px] shadow-[0_2px_10px_rgba(0,0,0,0.7)]">
    <div className="absolute top-[140px] right-0 h-[46px] w-[5px] bg-[linear-gradient(transparent,#1f8583_20%,#1f8583_80%,transparent)]" />
    <div className="-mx-[6px] flex h-[28px] shrink-0 justify-between rounded-t-[5px] bg-[linear-gradient(180deg,rgba(255,255,255,0.2)_0,transparent_4px,transparent_15px,rgba(215,218,224,0.9)_26px),linear-gradient(90deg,#9eacb4_0,#b8babc_60px,#a4a4a4_180px,#5a5a5a_240px,#444_330px,#3e3e3e)] pr-[6px] pl-[7px]">
      <div className="flex items-center gap-[5px]">
        <EzIcon />
        <span className="rounded-full shadow-[0_0_10px_6px_rgba(255,255,255,0.2)]">Index size for Views and Folders</span>
      </div>
      <CaptionButtons />
    </div>
    <div className="flex min-h-0 flex-1 flex-col border border-[#5c5f62] bg-[#ccc] px-[11px] pt-[11px]">
      <div className="flex min-h-0 flex-1 flex-col border border-t-[#9b9ea3] border-r-white border-b-white border-l-[#9b9ea3] bg-[#ebebeb]">
        <Toolbar />
        <div className="flex h-[35px] shrink-0 items-center justify-between pr-[6px] pl-[9px]">
          <button type="button" className="flex h-[22px] items-center gap-[7px] border border-[#8d97a6] bg-[linear-gradient(#fdfdfd,#d9dce1)] pr-[7px] pl-[2px]">
            Discard
            <SortMark />
            <span className="-ml-[3px]"><FilterIcon /></span>
          </button>
          <button type="button" aria-label="Trash" className="-mt-[4px]"><TrashIcon /></button>
        </div>
        <div className="flex min-h-0 flex-1">
          <div className="flex min-w-0 flex-1 flex-col">
            <div className="flex min-h-0 flex-1">
              <div className="flex min-w-0 flex-1 flex-col">
                <div className="min-h-0 flex-1 overflow-hidden bg-white">
                  <IndexTable />
                </div>
                <div className="h-[23px] shrink-0 border-y border-[#8d97a6] bg-[linear-gradient(#f7f7f8,#d6d9de)] pl-[2px] leading-[20px] whitespace-pre">
                  Rows Loaded: 108  |  Rows Displayed: 108  |  Rows Selected: 4
                </div>
              </div>
              <div className="flex w-[16px] flex-col items-center bg-[linear-gradient(90deg,#f2f3f6,#fff)]">
                <div className="flex h-[17px] items-center"><Arrow /></div>
                <div className="flex h-[193px] w-[15px] items-center justify-center border border-[#5d6e94] bg-[linear-gradient(90deg,#fff_30%,#cfd6e6_60%,#f4f6fa)]">
                  <span className="h-[8px] w-[6px] bg-[repeating-linear-gradient(#8b94aa_0_1px,transparent_1px_2px)]" />
                </div>
                <div className="flex-1" />
                <div className="flex h-[19px] items-center"><Arrow dir="down" /></div>
              </div>
            </div>
            <div className="flex h-[16px] shrink-0">
              <div className="flex min-w-0 flex-1 items-center bg-[linear-gradient(#fff,#eef0f4)] pr-[5px]">
                <span className="flex w-[17px] justify-center"><Arrow dir="left" /></span>
                <div className="flex h-[15px] w-[696px] items-center justify-center border border-[#5d6e94] bg-[linear-gradient(#fff_30%,#cfd6e6_60%,#f4f6fa)]">
                  <span className="h-[6px] w-[8px] bg-[repeating-linear-gradient(90deg,#8b94aa_0_1px,transparent_1px_2px)]" />
                </div>
                <span className="ml-auto"><Arrow dir="right" /></span>
              </div>
              <div className="w-[16px] bg-[#ccc]" />
            </div>
          </div>
          <div className="w-[8px] border border-[#b4b9c4] bg-[linear-gradient(90deg,#eef0f4,#fff)] pt-[340px]">
            <div className="h-[28px] w-[6px] rounded-[1px] border border-[#8a8f9a] bg-[linear-gradient(#eef0f4_50%,#c3c9d6_50%)]" />
          </div>
        </div>
      </div>
      <div className="flex shrink-0 justify-between pt-[6px] pb-[10px]">
        <PushButton className="ml-[360px] w-[232px] bg-[linear-gradient(#fafbfd_50%,#d3dae8_50%)]">
          Purge Index for Selected View(s)...
        </PushButton>
        <PushButton className="w-[109px] bg-[linear-gradient(#c9dcf7_50%,#9dc0ee_50%)] font-bold">Close</PushButton>
      </div>
    </div>
    <div className="absolute right-[7px] bottom-[9px]"><Grip /></div>
  </div>
);

/* ---------- properties dialog ---------- */

const Combo = ({ id, value, options, onChange, active }) => (
  <span
    className={clsx(
      "flex h-[21px] w-[141px] border bg-white",
      active ? "border-[#7d95c4] p-[1px] pr-0" : "border-[#adb9d3]"
    )}
  >
    <select
      id={id}
      value={value}
      onChange={(e) => onChange(e.target.value)}
      className={clsx(
        "min-w-0 flex-1 appearance-none pl-[2px] leading-[16px] outline-none",
        active ? "mr-[4px] bg-[#3399ff] text-white" : "bg-white text-black"
      )}
    >
      {options.map((o) => (
        <option key={o}>{o}</option>
      ))}
    </select>
    <span
      className={clsx(
        "flex w-[14px] items-center justify-center",
        active ? "-my-[1px] bg-[linear-gradient(#b9c9e8_50%,#7d95c8_50%)]" : "bg-[#bac5e0]"
      )}
    >
      <svg width="6" height="4" viewBox="0 0 6 4" aria-hidden="true"><path d="M0 0h6L3 3.500z" fill="#fff" /></svg>
    </span>
  </span>
);

const PropertiesDialog = () => {
  const [refresh, setRefresh] = useState("[ - No Change - ]");
  const [discard, setDiscard] = useState(INACTIVE);

  return (
    <div className="absolute top-[316px] left-[591px] w-[375px] rounded-[6px] border border-[#1e1e1e] bg-[linear-gradient(#a9a9a9_0,#9c9c9c_20px,#dcdcdc_67px,#8f8f8f_69px,#9a9a9a)] px-[6px] pb-[6px] shadow-[0_2px_14px_2px_rgba(0,0,0,0.75)]">
      <div className="-mx-[6px] flex h-[28px] justify-between rounded-t-[5px] bg-[linear-gradient(90deg,#c4c4c4_0,#b5b5b5_130px,#929292_190px,#868686)] pr-[5px] pl-[7px]">
        <div className="flex items-center gap-[5px]">
          <EzIcon />
          View Index Properties
        </div>
        <button
          type="button"
          aria-label="Close dialog"
          className="flex h-[19px] w-[47px] items-center justify-center rounded-b-[4px] border border-t-0 border-[#5b1a13] bg-[linear-gradient(#dd8a7b_45%,#b92f17_50%,#d4583c)] shadow-[inset_0_0_0_1px_rgba(255,255,255,0.4)]"
        >
          <Svg size={14}>
            <path d="M4 3l8 10M12 3L4 13" stroke="#555" strokeWidth="5" />
            <path d="M4.500 3.500l7 9M11.500 3.500l-7 9" stroke="#fff" strokeWidth="3" />
          </Svg>
        </button>
      </div>
      <div className="flex flex-col border border-[#5c5c5c] bg-[#ccc] pr-[11px] pl-[11px] shadow-[0_0_0_1px_#d9d9d9]">
        <p className="pt-[12px] leading-[15px]">
          Warning: any modification will be applied to the views<br />immediately.
        </p>
        <div className="mt-[11px] flex items-center">
          <label htmlFor="refresh" className="w-[62px] pb-[4px]">Refresh</label>
          <Combo id="refresh" active value={refresh} onChange={setRefresh} options={["[ - No Change - ]", "Automatic", "Manual"]} />
        </div>
        <div className="mt-[7px] flex items-center">
          <label htmlFor="discard" className="w-[62px] pb-[4px]">Discard</label>
          <Combo id="discard" value={discard} onChange={setDiscard} options={[INACTIVE, "After each use"]} />
        </div>
        <div className="mt-[6px] flex h-[16px] items-center gap-[5px]">
          <CheckBox id="restrict" />
          <label htmlFor="restrict">Restrict initial index build to designer or manager</label>
        </div>
        <div className="mt-[6px] mb-[11px] flex justify-end gap-[6px]">
          <PushButton disabled className="w-[75px] bg-[linear-gradient(#d3d3d3_50%,#c7c9cd_50%)] font-bold text-[#8a8a8a] opacity-80">
            <span><u>A</u>pply</span>
          </PushButton>
          <PushButton className="w-[75px] bg-[linear-gradient(#fafbfd_50%,#d3dae8_50%)]">
            <span><u>C</u>ancel</span>
          </PushButton>
        </div>
      </div>
      <div className="absolute right-[7px] bottom-[7px]"><Grip /></div>
    </div>
  );
};

const App = () => (
  <div className="relative h-screen w-full overflow-hidden bg-white font-['Roboto','Open_Sans',sans-serif] text-[12px] leading-[16px] text-black">
    <MailClient />
    <ViewEzWindow />
    <IndexWindow />
    <PropertiesDialog />
    <svg width="12" height="20" viewBox="0 0 12 20" aria-hidden="true" className="pointer-events-none absolute top-[281px] left-[384px]">
      <path d="M.5.5v15.500l3.500-3.300 2.300 5.800 2.500-1-2.400-5.700h5z" fill="#fff" stroke="#000" />
    </svg>
  </div>
);

export default App;
